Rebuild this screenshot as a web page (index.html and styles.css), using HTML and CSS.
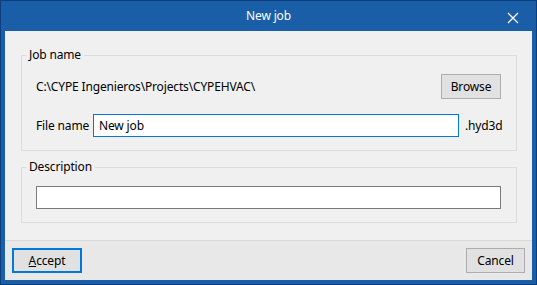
FILE: index.html
```html
<!DOCTYPE html>
<html lang="en">
<head>
    <meta charset="UTF-8">
    <meta name="viewport" content="width=device-width, initial-scale=1.0">
    <title>New job</title>
    <link rel="stylesheet" href="styles.css">
</head>
<body>
    <div class="window">
        <div class="titlebar">
            <span class="title">New job</span>
            <svg class="close" width="12" height="12" viewBox="0 0 12 12">
                <path d="M1 1 L11 11 M11 1 L1 11" stroke="#fff" stroke-width="1.3" fill="none"/>
            </svg>
        </div>
        <div class="client">
            <div class="content">
                <fieldset class="group job-group">
                    <legend>Job name</legend>
                    <div class="row path-row">
                        <span class="path">C:\CYPE Ingenieros\Projects\CYPEHVAC\</span>
                        <button class="btn browse">Browse</button>
                    </div>
                    <div class="row file-row">
                        <label for="fileName">File name</label>
                        <input type="text" id="fileName" class="field focused" value="New job">
                        <span class="ext">.hyd3d</span>
                    </div>
                </fieldset>
                <fieldset class="group desc-group">
                    <legend>Description</legend>
                    <input type="text" class="field desc">
                </fieldset>
            </div>
            <div class="footer">
                <button class="btn accept"><u>A</u>ccept</button>
                <button class="btn cancel">Cancel</button>
            </div>
        </div>
    </div>
</body>
</html>
```

FILE: styles.css
```css
* {
    box-sizing: border-box;
}
body {
    margin: 0;
    font-family: "Noto Sans", sans-serif;
    font-size: 12px;
    letter-spacing: -0.15px;
    color: #000;
}
.window {
    width: 537px;
    height: 285px;
    background-color: #1a5ea8;
    border: 1px solid #0e3d7e;
    padding: 0 4px 4px 4px;
    display: flex;
    flex-direction: column;
}
.titlebar {
    height: 30px;
    display: flex;
    align-items: center;
    justify-content: center;
    position: relative;
    color: #fff;
}
.title {
    font-size: 12px;
    margin-top: -1px;
}
.close {
    position: absolute;
    right: 13px;
    top: 11px;
}
.client {
    flex: 1;
    background-color: #f0f0f0;
    display: flex;
    flex-direction: column;
}
.content {
    padding: 16px 15px 17px 16px;
    flex: 1;
}
.group {
    margin: 0;
    border: 1px solid #dcdcdc;
    padding: 0 15px 13px 14px;
    min-width: 0;
}
.group legend {
    margin-left: -10px;
    padding: 0 3px;
    line-height: 16px;
}
.desc-group {
    margin-top: 8px;
}
.row {
    display: flex;
    align-items: center;
}
.path-row {
    margin-top: 11px;
    justify-content: space-between;
}
.file-row {
    margin-top: 15px;
}
.file-row label {
    width: 57px;
}
.field {
    font-family: inherit;
    font-size: 12px;
    letter-spacing: inherit;
    height: 23px;
    padding: 0 5px;
    background-color: #fff;
    border: 1px solid #7a7a7a;
    outline: none;
}
.field.focused {
    flex: 1;
    border-color: #0078d7;
}
.ext {
    margin-left: 6px;
    width: 36px;
}
.desc {
    display: block;
    width: 100%;
    margin-top: 11px;
}
.btn {
    font-family: inherit;
    font-size: 12px;
    letter-spacing: inherit;
    color: #000;
    background-color: #e1e1e1;
    border: 1px solid #adadad;
    padding: 0;
    height: 25px;
}
.browse {
    width: 60px;
}
.footer {
    height: 40px;
    border-top: 1px solid #dadada;
    background-color: #e8e8e8;
    display: flex;
    justify-content: space-between;
    padding: 7px 7px 0 7px;
}
.accept {
    width: 70px;
    height: 25px;
    border: 2px solid #0078d7;
}
.cancel {
    width: 59px;
    height: 25px;
}
```
